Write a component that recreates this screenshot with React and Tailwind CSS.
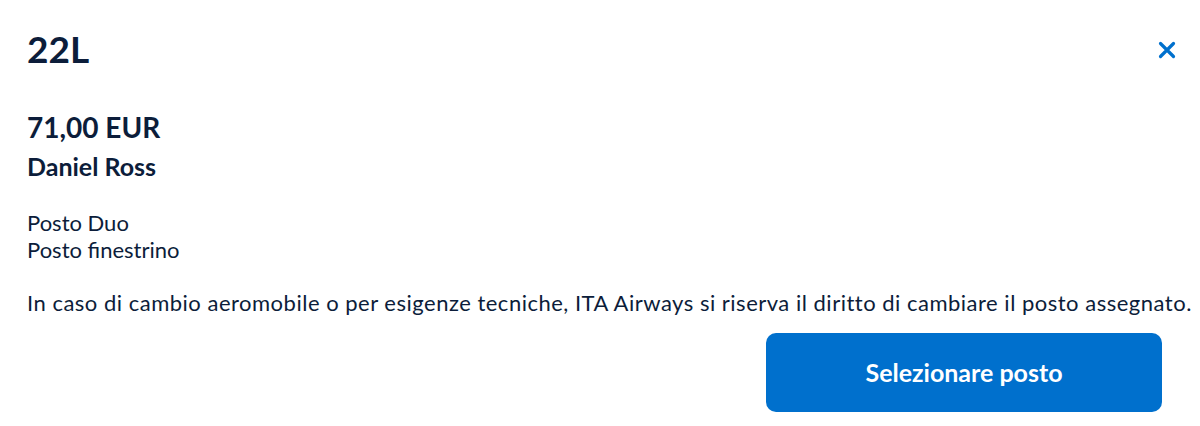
export default function App() {
  return (
    <div className="w-[1200px] h-[426px] bg-white text-[#0c1d3a] overflow-hidden" style={{ fontFamily: "Lato, 'Noto Sans', sans-serif" }}>
      <div className="pl-[27px] pr-[24px] pt-[27px]">
        <div className="flex items-start justify-between">
          <h1 className="text-[37px] leading-[44px] font-bold">22L</h1>
          <button className="mt-[14px] text-[#0070cd]" aria-label="Chiudi">
            <svg width="18" height="18" viewBox="0 0 18 18">
              <path d="M2.5 2.5 L15.5 15.5 M15.5 2.5 L2.5 15.5" stroke="currentColor" strokeWidth="3.2" strokeLinecap="round" fill="none" />
            </svg>
          </button>
        </div>
        <div className="mt-[39px] text-[28px] leading-[34px] font-bold">71,00 EUR</div>
        <div className="mt-[7px] text-[25px] leading-[30px] font-bold">Daniel Ross</div>
        <div className="mt-[28px] text-[22px] leading-[27px]">
          <div>Posto Duo</div>
          <div>Posto finestrino</div>
        </div>
        <p className="mt-[26px] text-[22px] leading-[27px] tracking-[0.5px] whitespace-nowrap">
          In caso di cambio aeromobile o per esigenze tecniche, ITA Airways si riserva il diritto di cambiare il posto assegnato.
        </p>
        <div className="mt-[17px] flex justify-end pr-[14px]">
          <button className="w-[396px] h-[79px] rounded-[10px] bg-[#0070cd] text-white text-[25px] font-bold">
            Selezionare posto
          </button>
        </div>
      </div>
    </div>
  );
}
